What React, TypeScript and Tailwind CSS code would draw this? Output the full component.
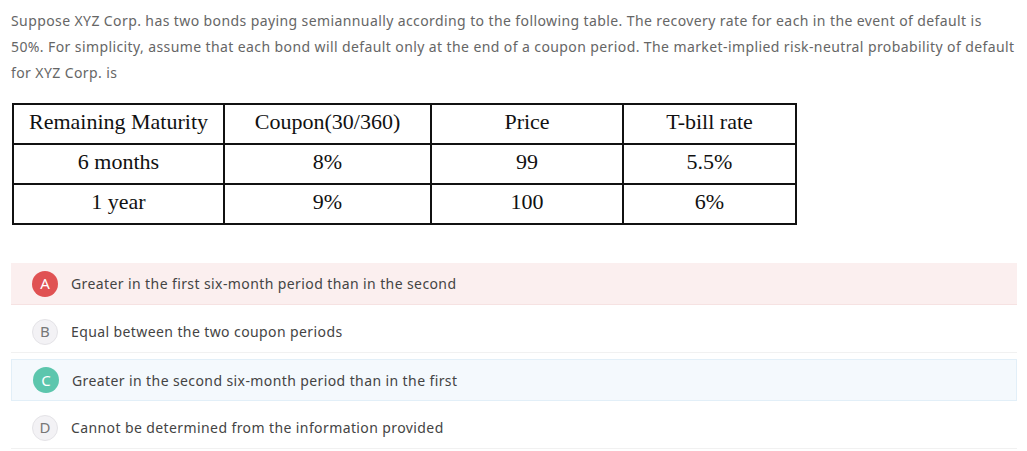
import React from 'react';

const rows = [
  ['Remaining Maturity', 'Coupon(30/360)', 'Price', 'T-bill rate'],
  ['6 months', '8%', '99', '5.5%'],
  ['1 year', '9%', '100', '6%'],
];

const colWidths = ['w-[211px]', 'w-[207px]', 'w-[192px]', 'w-[173px]'];

type Option = { key: string; text: string; state: 'wrong' | 'right' | 'none' };

const options: Option[] = [
  { key: 'A', text: 'Greater in the first six-month period than in the second', state: 'wrong' },
  { key: 'B', text: 'Equal between the two coupon periods', state: 'none' },
  { key: 'C', text: 'Greater in the second six-month period than in the first', state: 'right' },
  { key: 'D', text: 'Cannot be determined from the information provided', state: 'none' },
];

function OptionRow({ opt }: { opt: Option }) {
  const rowCls =
    opt.state === 'wrong'
      ? 'bg-[#fbefef] border-b border-[#f6e2e2]'
      : opt.state === 'right'
      ? 'bg-[#f4f9fd] border border-[#e2eff8]'
      : 'border-b border-[#f1f1f1]';
  const badgeCls =
    opt.state === 'wrong'
      ? 'bg-[#e05253] text-white'
      : opt.state === 'right'
      ? 'bg-[#5cc6ad] text-white'
      : 'bg-[#f3f2f5] border border-[#e4e3e7] text-[#777]';
  return (
    <div className={`mt-[6px] h-[42px] flex items-center pl-[21px] ${rowCls}`}>
      <div className={`w-[26px] h-[26px] rounded-full flex items-center justify-center text-[15px] ${badgeCls}`}>
        {opt.key}
      </div>
      <span className="ml-[13px] text-[14px] text-[#444] tracking-[0.4px]">{opt.text}</span>
    </div>
  );
}

export default function App() {
  return (
    <div className="w-[1027px] h-[451px] bg-white px-[11px] pt-[8px] overflow-hidden" style={{ fontFamily: '"Noto Sans", "Liberation Sans", Arial, sans-serif' }}>
      <p className="text-[14px] leading-[26px] text-[#666] tracking-[0.4px] whitespace-nowrap">
        Suppose XYZ Corp. has two bonds paying semiannually according to the following table. The recovery rate for each in the event of default is
        <br />
        50%. For simplicity, assume that each bond will default only at the end of a coupon period. The market-implied risk-neutral probability of default
        <br />
        for XYZ Corp. is
      </p>
      <table
        className="mt-[17px] ml-[1px] border-collapse border-2 border-[#111] text-[#111] text-[22px]"
        style={{ fontFamily: '"Liberation Serif", "Times New Roman", serif' }}
      >
        <tbody>
          {rows.map((r, i) => (
            <tr key={i} className="h-[40px]">
              {r.map((c, j) => (
                <td key={j} className={`${colWidths[j]} border-2 border-[#111] text-center leading-none p-0 pb-[4px]`}>
                  {c}
                </td>
              ))}
            </tr>
          ))}
        </tbody>
      </table>
      <div className="mt-[38px] w-[1006px]">
        {options.map((o) => (
          <OptionRow key={o.key} opt={o} />
        ))}
      </div>
    </div>
  );
}
